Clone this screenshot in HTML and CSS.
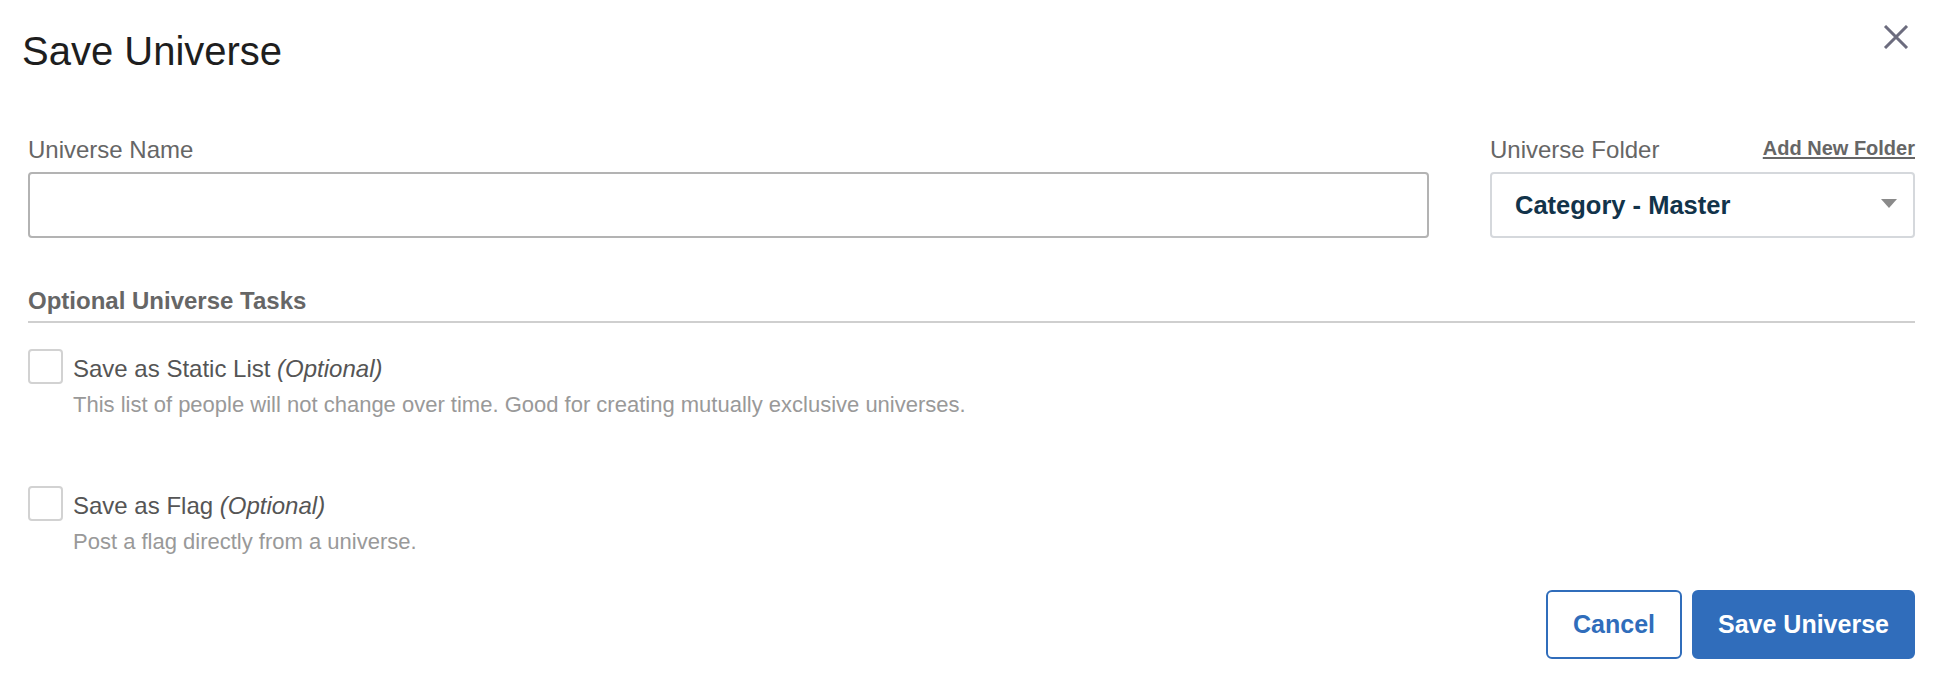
FILE: index.html
```html
<!DOCTYPE html>
<html lang="en">
<head>
    <meta charset="UTF-8">
    <meta name="viewport" content="width=device-width, initial-scale=1.0">
    <title>Save Universe</title>
    <link rel="stylesheet" href="styles.css">
</head>
<body>
    <div class="modal">
        <div class="modal-header">
            <h1 class="modal-title">Save Universe</h1>
            <button type="button" class="close-button" aria-label="Close">
                <svg width="26" height="24" viewBox="0 0 26 24">
                    <path d="M2 1 L24 23 M24 1 L2 23" stroke="#6c6c7e" stroke-width="3" fill="none"/>
                </svg>
            </button>
        </div>

        <div class="modal-body">
            <div class="field-row">
                <div class="field">
                    <div class="field-label-row">
                        <label for="universeName" class="field-label">Universe Name</label>
                    </div>
                    <input type="text" id="universeName" class="text-input">
                </div>

                <div class="field">
                    <div class="field-label-row">
                        <label for="universeFolder" class="field-label">Universe Folder</label>
                        <a href="#" class="add-folder">Add New Folder</a>
                    </div>
                    <div class="select-box" id="universeFolder">
                        <span class="select-value">Category - Master</span>
                        <span class="select-caret"></span>
                    </div>
                </div>
            </div>

            <h2 class="section-title">Optional Universe Tasks</h2>

            <div class="task">
                <span class="checkbox"></span>
                <div class="task-text">
                    <div class="task-label">Save as Static List <em>(Optional)</em></div>
                    <div class="task-desc">This list of people will not change over time. Good for creating mutually exclusive universes.</div>
                </div>
            </div>

            <div class="task">
                <span class="checkbox"></span>
                <div class="task-text">
                    <div class="task-label">Save as Flag <em>(Optional)</em></div>
                    <div class="task-desc">Post a flag directly from a universe.</div>
                </div>
            </div>

            <div class="modal-footer">
                <button type="button" class="btn btn-outline">Cancel</button>
                <button type="button" class="btn btn-primary">Save Universe</button>
            </div>
        </div>
    </div>
</body>
</html>
```

FILE: styles.css
```css
/* General styles */
body {
    margin: 0;
    font-family: "Liberation Sans", Arial, Helvetica, sans-serif;
    background-color: #fff;
}

.modal {
    width: 100%;
}

.modal-header {
    display: flex;
    justify-content: space-between;
    align-items: flex-start;
    padding: 27px 31px 0 22px;
}

.modal-title {
    margin: 0;
    font-size: 40px;
    line-height: 48px;
    font-weight: normal;
    color: #1e1e1e;
}

.close-button {
    background: none;
    border: none;
    padding: 0;
    margin-top: -2px;
    cursor: pointer;
}

.close-button svg {
    display: block;
}

.modal-body {
    padding: 0 25px 0 28px;
}

/* Name + folder */
.field-row {
    display: grid;
    grid-template-columns: 1fr 425px;
    column-gap: 61px;
    margin-top: 61px;
}

.field-label-row {
    display: flex;
    justify-content: space-between;
    align-items: flex-start;
    margin-bottom: 8px;
}

.field-label {
    font-size: 24px;
    line-height: 28px;
    color: #666;
}

.add-folder {
    font-size: 20px;
    line-height: 24px;
    font-weight: bold;
    color: #666;
    text-decoration: underline;
    text-underline-offset: 2px;
}

.text-input {
    display: block;
    box-sizing: border-box;
    width: 100%;
    height: 66px;
    border: 2px solid #b3b3b3;
    border-radius: 4px;
    padding: 0 20px;
    font-size: 24px;
    font-family: inherit;
}

.select-box {
    box-sizing: border-box;
    height: 66px;
    border: 2px solid #d5d8dc;
    border-radius: 4px;
    padding: 0 16px 0 23px;
    display: flex;
    align-items: center;
    justify-content: space-between;
}

.select-value {
    font-size: 25.5px;
    font-weight: bold;
    color: #12334a;
}

.select-caret {
    width: 0;
    height: 0;
    border-left: 8px solid transparent;
    border-right: 8px solid transparent;
    border-top: 9px solid #8a8a8a;
    margin-top: -4px;
}

/* Optional tasks */
.section-title {
    margin: 49px 0 0;
    padding-bottom: 6px;
    border-bottom: 2px solid #cfcfcf;
    font-size: 24px;
    line-height: 28px;
    font-weight: bold;
    color: #666;
}

.task {
    display: flex;
    gap: 10px;
    margin-top: 26px;
}

.task + .task {
    margin-top: 68px;
}

.checkbox {
    box-sizing: border-box;
    flex: 0 0 35px;
    width: 35px;
    height: 35px;
    border: 2px solid #d2d2d2;
    border-radius: 4px;
    background: #fff;
}

.task-text {
    padding-top: 6px;
}

.task-label {
    font-size: 24px;
    line-height: 28px;
    color: #555;
}

.task-desc {
    margin-top: 9px;
    font-size: 22px;
    line-height: 26px;
    color: #999;
}

/* Buttons */
.modal-footer {
    display: flex;
    justify-content: flex-end;
    gap: 10px;
    margin-top: 35px;
}

.btn {
    height: 69px;
    border-radius: 6px;
    border: 2px solid #306dbb;
    font-family: inherit;
    font-size: 25px;
    font-weight: bold;
    cursor: pointer;
}

.btn-outline {
    width: 136px;
    background-color: #fff;
    color: #306dbb;
}

.btn-primary {
    width: 223px;
    background-color: #306dbb;
    color: #fff;
}
```
